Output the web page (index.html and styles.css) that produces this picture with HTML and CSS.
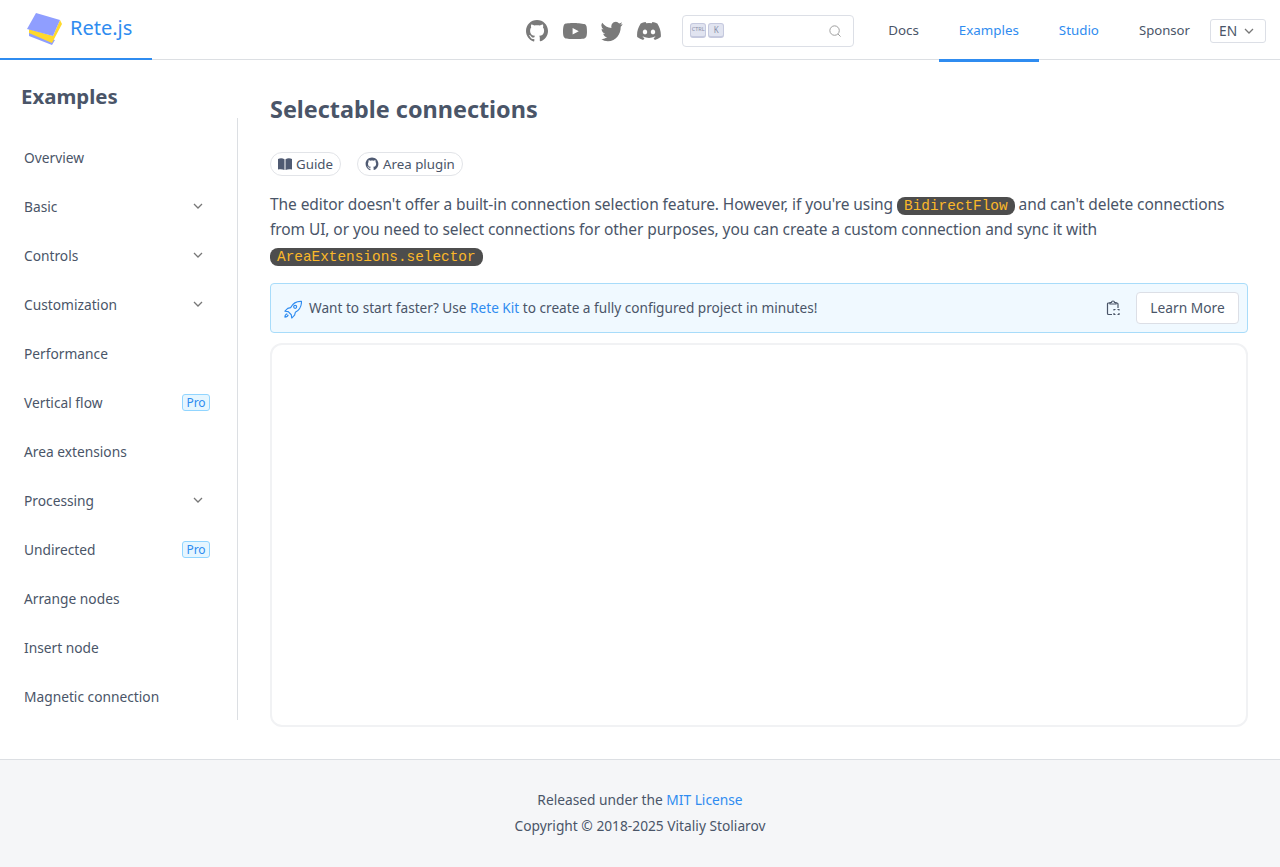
FILE: index.html
```html
<!DOCTYPE html>
<html lang="en">
<head>
  <meta charset="UTF-8">
  <title>Selectable connections | Rete.js</title>
  <link rel="stylesheet" href="styles.css">
</head>
<body>
  <header class="topbar">
    <a class="logo">
      <svg class="logo-mark" viewBox="0 0 36 36" width="36" height="36">
        <polygon points="3,22 29,30 26,35 3,26" fill="#8f9eff"/>
        <polygon points="3,19 27,26 34,10 36,14 26,33 3,23" fill="#ffd92c"/>
        <polygon points="10,3 34,10 27,26 1,19" fill="#8f9eff"/>
      </svg>
      <span class="logo-name">Rete.js</span>
    </a>
    <div class="topbar-right">
      <div class="socials">
        <svg width="24" height="24" viewBox="0 0 24 24" fill="#7a7a7a"><path d="M12 1C5.900 1 1 5.900 1 12c0 4.900 3.200 9 7.500 10.500.6.100.8-.2.8-.5v-2c-3.100.7-3.700-1.400-3.700-1.400-.5-1.300-1.200-1.600-1.200-1.600-1-.7.100-.7.100-.7 1.100.1 1.700 1.100 1.700 1.100 1 1.700 2.600 1.200 3.200.9.100-.7.400-1.200.7-1.500-2.400-.3-5-1.200-5-5.400 0-1.200.4-2.200 1.100-3-.1-.3-.5-1.400.1-2.900 0 0 .9-.3 3 1.100.9-.2 1.800-.4 2.800-.4s1.900.1 2.800.4c2.100-1.400 3-1.100 3-1.100.6 1.500.2 2.600.1 2.900.7.8 1.100 1.800 1.100 3 0 4.200-2.600 5.100-5 5.400.4.300.7 1 .7 2v3c0 .3.2.6.8.5C19.800 21 23 16.900 23 12c0-6.100-4.900-11-11-11z"/></svg>
        <svg width="24" height="24" viewBox="0 0 24 24" fill="#7a7a7a"><path d="M23.500 7.200a3 3 0 0 0-2.100-2.100C19.500 4.500 12 4 12 4s-7.500 0-9.400.6A3 3 0 0 0 .5 7.200C0 9.100 0 12.500 0 12.500s0 2.900.5 4.800a3 3 0 0 0 2.100 2.100c1.900.6 9.400.6 9.400.6s7.500 0 9.400-.6a3 3 0 0 0 2.100-2.100c.5-1.900.5-4.800.5-4.800s0-3.400-.5-5.300zM9.600 15.600V9l6.200 3.300z"/></svg>
        <svg width="22" height="24" viewBox="0 0 24 24" fill="#7a7a7a" preserveAspectRatio="none"><path d="M23.600 5.100c-.9.400-1.800.6-2.800.8 1-.6 1.800-1.500 2.100-2.700-.9.600-2 1-3.100 1.200a4.900 4.900 0 0 0-8.400 4.500C7.300 8.700 3.700 6.700 1.300 3.700A4.900 4.900 0 0 0 2.800 10.300c-.8 0-1.500-.2-2.200-.6v.1c0 2.400 1.700 4.400 3.900 4.800-.7.200-1.500.2-2.200.1.600 2 2.400 3.400 4.600 3.400A9.900 9.900 0 0 1 0 20.100a13.900 13.900 0 0 0 7.500 2.200c9.100 0 14-7.500 14-14v-.6c1-.7 1.800-1.600 2.100-2.600z"/></svg>
        <svg width="24" height="24" viewBox="0 0 24 24" fill="#7a7a7a"><path d="M20.300 4.400A19.800 19.800 0 0 0 15.400 3l-.6 1.300a18.300 18.300 0 0 0-5.500 0L8.600 3a19.700 19.700 0 0 0-4.900 1.400C.6 9.100-.3 13.600.2 18.100A19.900 19.900 0 0 0 6.200 21l1.300-2.100c-.7-.2-1.400-.6-2-1l.5-.4a14.200 14.200 0 0 0 12 0l.5.4c-.6.400-1.300.8-2 1l1.300 2.100a19.900 19.900 0 0 0 6-2.900c.5-5.200-.9-9.700-3.500-13.700zM8 15.300c-1.200 0-2.200-1.100-2.200-2.400S6.800 10.500 8 10.500s2.200 1.100 2.200 2.400-1 2.400-2.200 2.400zm8 0c-1.200 0-2.200-1.100-2.200-2.400s1-2.400 2.200-2.400 2.200 1.100 2.200 2.400-1 2.400-2.200 2.400z"/></svg>
      </div>
      <div class="search">
        <span class="key key-small">CTRL</span>
        <span class="key">K</span>
        <svg class="search-icon" width="12" height="12" viewBox="0 0 14 14" fill="none" stroke="#999" stroke-width="1.100"><circle cx="6.500" cy="6.500" r="5.500"/><path d="M10.500 10.500l3 3"/></svg>
      </div>
      <nav class="menu">
        <a>Docs</a>
        <a class="active">Examples</a>
        <a class="blue">Studio</a>
        <a class="sponsor">Sponsor</a>
      </nav>
      <div class="lang">EN
        <svg width="10" height="10" viewBox="0 0 10 10" fill="none" stroke="#777" stroke-width="1.300"><path d="M1 3l4 4 4-4"/></svg>
      </div>
    </div>
  </header>

  <div class="page">
    <aside class="sidebar">
      <h2>Examples</h2>
      <ul class="side-list">
        <li>Overview</li>
        <li>Basic <svg class="chev" viewBox="0 0 10 10"><path d="M1 3l4 4 4-4"/></svg></li>
        <li>Controls <svg class="chev" viewBox="0 0 10 10"><path d="M1 3l4 4 4-4"/></svg></li>
        <li>Customization <svg class="chev" viewBox="0 0 10 10"><path d="M1 3l4 4 4-4"/></svg></li>
        <li>Performance</li>
        <li>Vertical flow <span class="pro">Pro</span></li>
        <li>Area extensions</li>
        <li>Processing <svg class="chev" viewBox="0 0 10 10"><path d="M1 3l4 4 4-4"/></svg></li>
        <li>Undirected <span class="pro">Pro</span></li>
        <li>Arrange nodes</li>
        <li>Insert node</li>
        <li>Magnetic connection</li>
      </ul>
    </aside>

    <main class="content">
      <h1>Selectable connections</h1>
      <div class="tags">
        <a class="tag">
          <svg width="14" height="12" viewBox="0 0 14 12" fill="#4f5a72"><path d="M0 1c2-1 4.500-1 6.500.2V12C4.500 11 2 11 0 11.500zM14 1c-2-1-4.500-1-6.500.2V12c2-1 4.500-1 6.500-.5z"/></svg>
          Guide
        </a>
        <a class="tag">
          <svg width="14" height="14" viewBox="0 0 24 24" fill="#4f5a72"><path d="M12 1C5.900 1 1 5.900 1 12c0 4.900 3.200 9 7.500 10.500.6.100.8-.2.8-.5v-2c-3.100.7-3.700-1.400-3.700-1.400-.5-1.300-1.200-1.600-1.200-1.600-1-.7.100-.7.100-.7 1.100.1 1.700 1.100 1.700 1.100 1 1.700 2.600 1.200 3.200.9.100-.7.400-1.200.7-1.500-2.400-.3-5-1.200-5-5.400 0-1.200.4-2.200 1.100-3-.1-.3-.5-1.400.1-2.900 0 0 .9-.3 3 1.100.9-.2 1.800-.4 2.800-.4s1.900.1 2.800.4c2.100-1.400 3-1.100 3-1.100.6 1.500.2 2.600.1 2.900.7.8 1.100 1.800 1.100 3 0 4.200-2.600 5.100-5 5.400.4.300.7 1 .7 2v3c0 .3.2.6.8.5C19.800 21 23 16.900 23 12c0-6.100-4.900-11-11-11z"/></svg>
          Area plugin
        </a>
      </div>
      <p class="intro">The editor doesn't offer a built-in connection selection feature. However, if you're using <code>BidirectFlow</code> and can't delete connections from UI, or you need to select connections for other purposes, you can create a custom connection and sync it with <code>AreaExtensions.selector</code></p>
      <div class="alert">
        <svg class="rocket" width="19" height="19" viewBox="0 0 20 20" fill="none" stroke="#2f8cf0" stroke-width="1.200" stroke-linejoin="round"><path d="M18.500 1.500c-4.500 0-8 2-10.500 6.500l-3 .8-3 3 3.500.5 3.200 3.200.5 3.500 3-3 .8-3c4.500-2.500 6.500-6 6.500-11.500z"/><circle cx="12.800" cy="7.200" r="1.600"/><path d="M4.500 14.500c-1.500.5-2.500 2-2.500 3.500 1.500 0 3-1 3.500-2.500"/></svg>
        <span class="alert-text">Want to start faster? Use <a>Rete Kit</a> to create a fully configured project in minutes!</span>
        <svg class="clip" width="16" height="16" viewBox="0 0 16 16" fill="none" stroke="#4a5568" stroke-width="1.200"><path d="M5 3H3.500a1 1 0 0 0-1 1v9.500a1 1 0 0 0 1 1H7M11 3h1a1 1 0 0 1 1 1v4"/><path d="M5 4V2.500h1.500a1.500 1.500 0 0 1 3 0H11V4z"/><path d="M9 10.500v-1h1.500M12.500 9.500H14v1M14 13v1.500h-1.500M10.500 14.500H9V13"/></svg>
        <button class="learn">Learn More</button>
      </div>
      <div class="editor"></div>
    </main>
  </div>

  <footer class="footer">
    <div>Released under the <a>MIT License</a></div>
    <div>Copyright © 2018-2025 Vitaliy Stoliarov</div>
  </footer>
</body>
</html>
```

FILE: styles.css
```css
* {
  box-sizing: border-box;
}

body {
  margin: 0;
  font-family: "Noto Sans", "Open Sans", sans-serif;
  font-size: 13.750px;
  color: #4a5568;
  background: #fff;
}

a {
  color: #2f8cf0;
}

/* top bar */
.topbar {
  height: 60px;
  display: flex;
  align-items: stretch;
  border-bottom: 1px solid #dcdfe3;
}

.logo {
  width: 152px;
  height: 60px;
  padding-left: 26px;
  display: flex;
  align-items: center;
  gap: 8px;
  font-size: 20px;
  border-bottom: 2px solid #2f8cf0;
}

.logo-mark {
  margin-top: -3px;
}

.logo-name {
  margin-bottom: 3px;
}

.topbar-right {
  margin-left: auto;
  padding-right: 14px;
  display: flex;
  align-items: center;
}

.socials {
  display: flex;
  gap: 14px;
  align-items: center;
  margin: 2px 21px 0 0;
}

.search {
  width: 172px;
  height: 32px;
  border: 1px solid #dcdfe6;
  border-radius: 4px;
  padding: 0 12px 0 7px;
  display: flex;
  align-items: center;
  gap: 2px;
  margin: 2px 14px 0 0;
}

.key {
  width: 16px;
  height: 15px;
  font-size: 8px;
  line-height: 11px;
  text-align: center;
  color: #8a8fa8;
  background: #e1e4f0;
  border: 1px solid #c5c9de;
  border-bottom-width: 2px;
  border-radius: 3px;
}

.key-small {
  font-size: 5.500px;
}

.search-icon {
  margin-left: auto;
}

.menu {
  display: flex;
  align-self: stretch;
}

.menu a {
  padding: 0 20px;
  height: 62px;
  line-height: 60px;
  font-size: 13.350px;
  color: #4a5568;
}

.menu a.active {
  color: #2f8cf0;
  border-bottom: 3px solid #2f8cf0;
}

.menu a.blue {
  color: #2f8cf0;
}

.menu a.sponsor {
  font-size: 13.150px;
}

.lang {
  width: 56px;
  height: 24px;
  margin-top: 2px;
  border: 1px solid #dcdfe6;
  border-radius: 3px;
  padding-left: 8px;
  display: flex;
  align-items: center;
  gap: 7px;
  line-height: 1;
}

/* sidebar + content */
.page {
  display: flex;
  height: 699px;
}

.sidebar {
  width: 238px;
  flex-shrink: 0;
}

.sidebar h2 {
  margin: 0;
  height: 58px;
  padding: 21px 0 0 21px;
  font-size: 20.400px;
  line-height: 30px;
  font-weight: 700;
}

.side-list {
  list-style: none;
  margin: 0;
  height: 602px;
  padding: 15px 0 0;
  border-right: 1px solid #dcdfe3;
}

.side-list li {
  height: 49px;
  padding: 0 27px 1px 24px;
  display: flex;
  align-items: center;
  justify-content: space-between;
}

.chev {
  width: 10px;
  height: 10px;
  margin-right: 7px;
  fill: none;
  stroke: #777;
  stroke-width: 1.300;
}

.pro {
  width: 28px;
  height: 17px;
  font-size: 12px;
  line-height: 15px;
  text-align: center;
  color: #2f8cf0;
  background: #e6f6ff;
  border: 1px solid #91d5ff;
  border-radius: 3px;
}

.content {
  flex: 1;
  padding: 30px 32px 0;
}

.content h1 {
  margin: 0;
  font-size: 23.400px;
  line-height: 38px;
  font-weight: 700;
}

.tags {
  display: flex;
  gap: 16px;
  margin-top: 24px;
}

.tag {
  height: 24px;
  padding: 0 7px 1px;
  font-size: 13.300px;
  border: 1px solid #e2e4e8;
  border-radius: 12px;
  display: flex;
  align-items: center;
  gap: 4px;
  color: #4a5568;
}

.intro {
  margin: 15.500px 0 0;
  font-size: 15.500px;
  letter-spacing: -0.080px;
  line-height: 25.600px;
}

code {
  font-family: "Liberation Mono", monospace;
  font-size: 14.400px;
  line-height: 1;
  letter-spacing: 0;
  color: #fbb829;
  background: #4d4d4d;
  padding: 1px 7px;
  border-radius: 8px;
}

.alert {
  margin-top: 14.500px;
  height: 50px;
  padding: 0 8px 0 12px;
  display: flex;
  align-items: center;
  font-size: 13.640px;
  background: #f0f9ff;
  border: 1px solid #a8dcfa;
  border-radius: 4px;
}

.rocket {
  margin-right: 7px;
  margin-top: 4px;
}

.alert-text {
  flex: 1;
}

.clip {
  margin-right: 15px;
}

.learn {
  width: 103px;
  height: 32px;
  font: inherit;
  font-size: 13.750px;
  color: #4a5568;
  background: #fff;
  border: 1px solid #dcdfe6;
  border-radius: 4px;
}

.editor {
  margin-top: 10px;
  height: 384px;
  border: 2px solid #f1f2f4;
  border-radius: 12px;
}

.footer {
  height: 108px;
  padding-top: 27px;
  text-align: center;
  line-height: 26px;
  background: #f5f6f8;
  border-top: 1px solid #dcdfe3;
}
```
